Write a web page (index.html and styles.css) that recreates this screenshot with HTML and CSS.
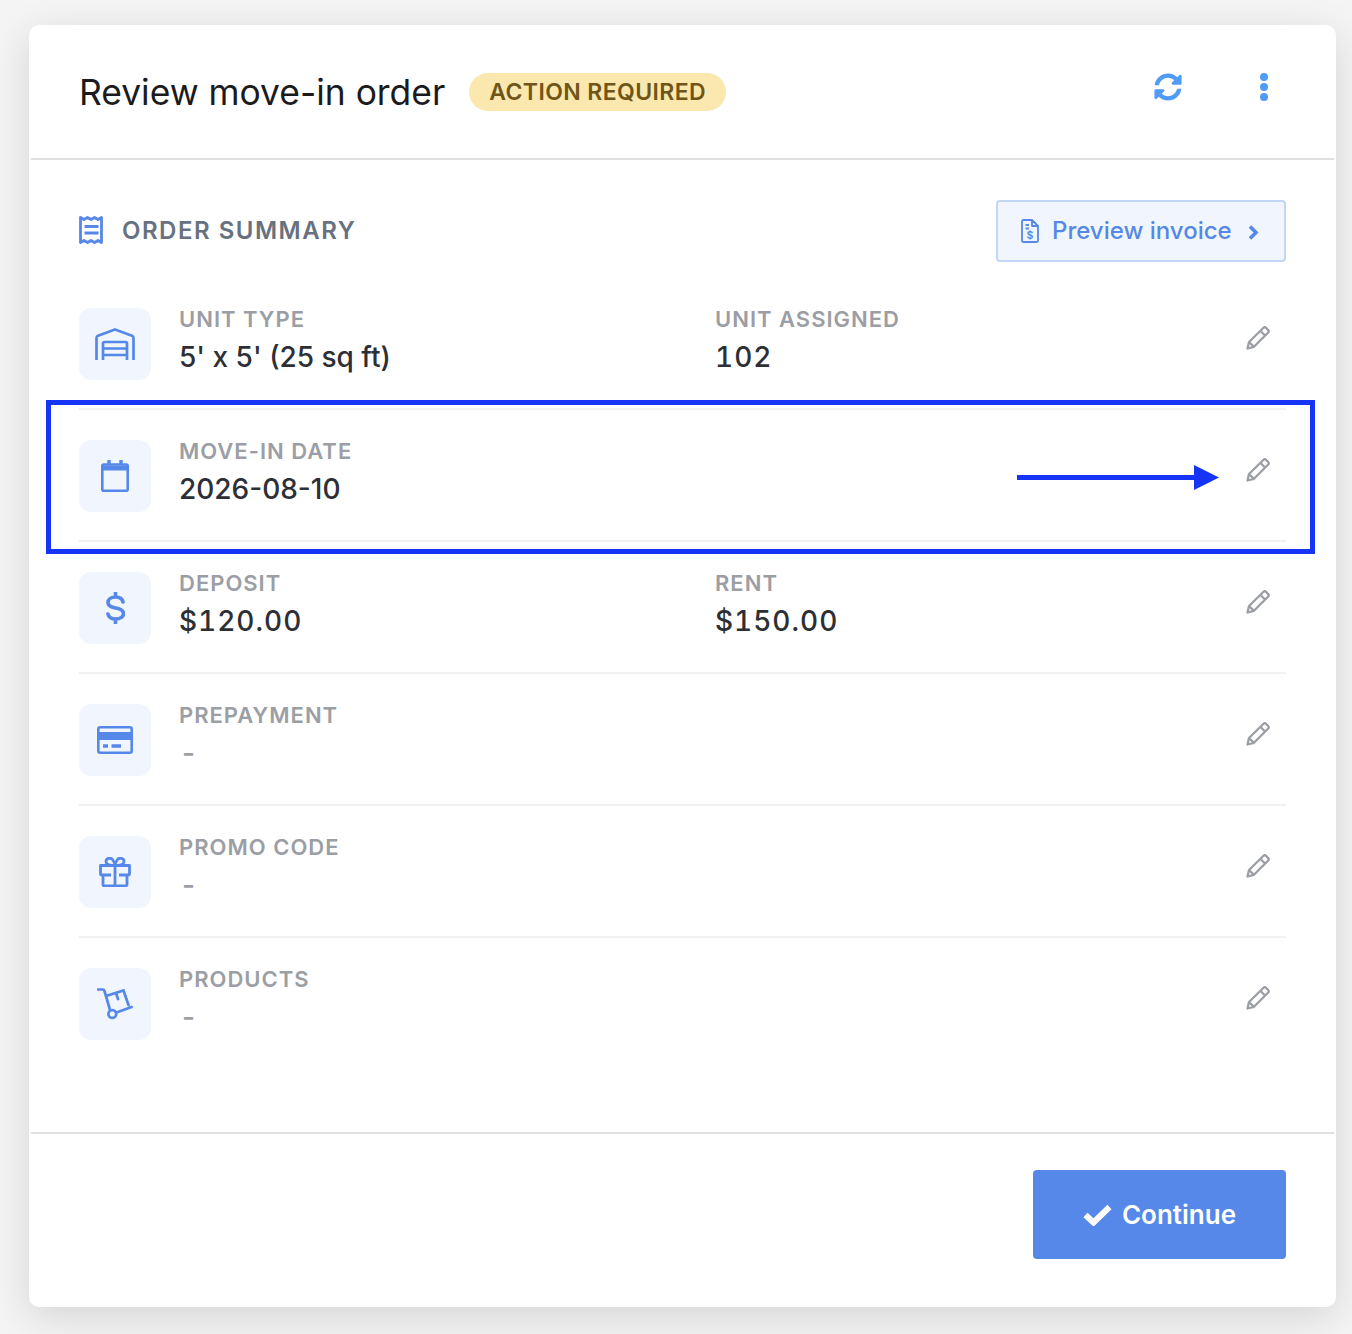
FILE: index.html
```html
<!DOCTYPE html>
<html lang="en">
<head>
<meta charset="utf-8">
<title>Review move-in order</title>
<link rel="stylesheet" href="styles.css">
</head>
<body>
<main class="card">
  <header class="head">
    <h1 class="title">Review move-in order</h1>
    <span class="badge">ACTION REQUIRED</span>
    <div class="head-actions">
      <svg class="sync" viewBox="0 0 512 512"><path d="M370.72 133.28C339.458 104.008 298.888 87.962 255.848 88c-77.458.068-144.328 53.178-162.791 126.85-1.344 5.363-6.122 9.15-11.651 9.15H24.103c-7.498 0-13.194-6.807-11.807-14.176C33.933 94.924 134.813 8 256 8c66.448 0 126.791 26.136 171.315 68.685L463.03 40.97C478.149 25.851 504 36.559 504 57.941V192c0 13.255-10.745 24-24 24H345.941c-21.382 0-32.09-25.851-16.971-40.971l41.75-41.749zM32 296h134.059c21.382 0 32.09 25.851 16.971 40.971l-41.75 41.75c31.262 29.273 71.835 45.319 114.876 45.28 77.418-.07 144.315-53.144 162.787-126.849 1.344-5.363 6.122-9.15 11.651-9.15h57.304c7.498 0 13.194 6.807 11.807 14.176C478.067 417.076 377.187 504 256 504c-66.448 0-126.791-26.136-171.315-68.685L48.97 471.03C33.851 486.149 8 475.441 8 454.059V320c0-13.255 10.745-24 24-24z"/></svg>
      <span class="dots"><i></i><i></i><i></i></span>
    </div>
  </header>

  <section class="body">
    <div class="summary-bar">
      <div class="summary-title">
        <svg class="receipt" viewBox="0 0 25 28" fill="none"><path d="M1.500 1.500l3.500 2 3.500-2 3.500 2 3.500-2 3.500 2 3.500-2v25l-3.500-2-3.500 2-3.500-2-3.500 2-3.500-2-3.500 2z" stroke="#5588e8" stroke-width="2.800" stroke-linejoin="round"/><path d="M5.500 10.500h14M5.500 17h14" stroke="#5588e8" stroke-width="2.800"/></svg>
        <span>ORDER SUMMARY</span>
      </div>
      <button class="preview" type="button">
        <svg class="doc" viewBox="0 0 18 24" fill="none"><path d="M2.500 1h8.500l6 6v14.500a1.500 1.500 0 0 1-1.500 1.500h-13A1.500 1.500 0 0 1 1 21.500v-19A1.500 1.500 0 0 1 2.500 1zM11 1v6h6M4.500 6H8M4.500 9.500H8" stroke="#5588e8" stroke-width="1.800" stroke-linejoin="round"/><text x="9" y="20" font-size="10.500" text-anchor="middle" fill="#5588e8" stroke="none" font-family="Inter" font-weight="600">$</text></svg>
        <span class="preview-text">Preview invoice</span>
        <svg class="chev" viewBox="0 0 11 15" fill="none"><path d="M2 1.500l6 6-6 6" stroke="#5588e8" stroke-width="3.600"/></svg>
      </button>
    </div>

    <ul class="rows">
      <li class="row">
        <div class="icon"><svg width="40" height="32" viewBox="0 0 40 32" fill="none"><path d="M1.500 32V10c0-1 .5-1.800 1.500-2.200L20 1.400l17 6.400c1 .4 1.500 1.200 1.500 2.200v22M8 32V15.500c0-1 .5-1.500 1.500-1.500h21c1 0 1.500.5 1.500 1.500V32M8 20.500h24M8 27h24" stroke="#5588e8" stroke-width="2.700" stroke-linejoin="round"/></svg></div>
        <div class="field"><div class="label">UNIT TYPE</div><div class="value">5' x 5' (25 sq ft)</div></div>
        <div class="field"><div class="label">UNIT ASSIGNED</div><div class="value num">102</div></div>
        <svg class="pencil" viewBox="0 0 24 24" fill="none"><path d="M1.500 22.500l1.500-6.500L17.500 1.800a1.800 1.800 0 0 1 2.500 0l2.200 2.200a1.800 1.800 0 0 1 0 2.500L8 20.800zM3 16l5 4.800M14.500 5l4.500 4.500" stroke="#9b9ea4" stroke-width="2.300" stroke-linejoin="round"/></svg>
      </li>
      <li class="row">
        <div class="icon"><svg width="28" height="32" viewBox="0 0 28 32" fill="none"><rect x="1.300" y="4.500" width="25.400" height="26.200" rx="1.500" stroke="#5588e8" stroke-width="2.600"/><path d="M1.500 8h25" stroke="#5588e8" stroke-width="5"/><path d="M8 0v5M20 0v5" stroke="#5588e8" stroke-width="3.400"/></svg></div>
        <div class="field"><div class="label">MOVE-IN DATE</div><div class="value">2026-08-10</div></div>
        <div class="field"></div>
        <svg class="pencil" viewBox="0 0 24 24" fill="none"><path d="M1.500 22.500l1.500-6.500L17.500 1.800a1.800 1.800 0 0 1 2.500 0l2.200 2.200a1.800 1.800 0 0 1 0 2.500L8 20.800zM3 16l5 4.800M14.500 5l4.500 4.500" stroke="#9b9ea4" stroke-width="2.300" stroke-linejoin="round"/></svg>
      </li>
      <li class="row">
        <div class="icon"><svg width="19" height="32" viewBox="0 0 19 32" fill="none"><path d="M17 10c-.6-3-3.500-5-7.500-5C5 5 2 7.500 2 10.500 2 14 5 15.200 9.500 16c5 .8 8 2.200 8 5.500 0 3-3 5.500-8 5.500-4 0-7-2-7.500-5M9.500 1v4M9.500 27v4" stroke="#5588e8" stroke-width="3.700" stroke-linecap="round"/></svg></div>
        <div class="field"><div class="label">DEPOSIT</div><div class="value num">$120.00</div></div>
        <div class="field"><div class="label">RENT</div><div class="value num">$150.00</div></div>
        <svg class="pencil" viewBox="0 0 24 24" fill="none"><path d="M1.500 22.500l1.500-6.500L17.500 1.800a1.800 1.800 0 0 1 2.500 0l2.200 2.200a1.800 1.800 0 0 1 0 2.500L8 20.800zM3 16l5 4.800M14.500 5l4.500 4.500" stroke="#9b9ea4" stroke-width="2.300" stroke-linejoin="round"/></svg>
      </li>
      <li class="row">
        <div class="icon"><svg width="36" height="28" viewBox="0 0 36 28" fill="none"><rect x="1.300" y="1.300" width="33.400" height="25.400" rx="2" stroke="#5588e8" stroke-width="2.600"/><path d="M1 10h34" stroke="#5588e8" stroke-width="8"/><path d="M6 20h5M14.500 20h9.500" stroke="#5588e8" stroke-width="3.600"/></svg></div>
        <div class="field"><div class="label">PREPAYMENT</div><div class="value muted">-</div></div>
        <div class="field"></div>
        <svg class="pencil" viewBox="0 0 24 24" fill="none"><path d="M1.500 22.500l1.500-6.500L17.500 1.800a1.800 1.800 0 0 1 2.500 0l2.200 2.200a1.800 1.800 0 0 1 0 2.500L8 20.800zM3 16l5 4.800M14.500 5l4.500 4.500" stroke="#9b9ea4" stroke-width="2.300" stroke-linejoin="round"/></svg>
      </li>
      <li class="row">
        <div class="icon"><svg width="32" height="30" viewBox="0 0 32 30" fill="none"><path d="M12 18H3a1.500 1.500 0 0 1-1.500-1.500V8.500h29v8A1.500 1.500 0 0 1 29 18h-9M4 18v9.500A1.500 1.500 0 0 0 5.500 29h21a1.500 1.500 0 0 0 1.500-1.500V18M16 8.500V29M16 8.500c-3 0-9-.5-9-4 0-3.500 5-4 6.500-2S16 6 16 8.500zm0 0c3 0 9-.5 9-4 0-3.500-5-4-6.500-2S16 6 16 8.500z" stroke="#5588e8" stroke-width="2.800" stroke-linejoin="round"/></svg></div>
        <div class="field"><div class="label">PROMO CODE</div><div class="value muted">-</div></div>
        <div class="field"></div>
        <svg class="pencil" viewBox="0 0 24 24" fill="none"><path d="M1.500 22.500l1.500-6.500L17.500 1.800a1.800 1.800 0 0 1 2.500 0l2.200 2.200a1.800 1.800 0 0 1 0 2.500L8 20.800zM3 16l5 4.800M14.500 5l4.500 4.500" stroke="#9b9ea4" stroke-width="2.300" stroke-linejoin="round"/></svg>
      </li>
      <li class="row">
        <div class="icon"><svg width="36" height="32" viewBox="0 0 36 32" fill="none"><path d="M1 1.500h4.500c1 0 1.700.5 2 1.500l5.500 19" stroke="#5588e8" stroke-width="2.700" stroke-linecap="round" stroke-linejoin="round"/><circle cx="15.300" cy="26" r="3.900" stroke="#5588e8" stroke-width="2.700"/><path d="M19.500 24.500L34.500 19M10.500 7.500l16-5 5 14.500M19 5l2 6" stroke="#5588e8" stroke-width="2.700" stroke-linecap="round"/></svg></div>
        <div class="field"><div class="label">PRODUCTS</div><div class="value muted">-</div></div>
        <div class="field"></div>
        <svg class="pencil" viewBox="0 0 24 24" fill="none"><path d="M1.500 22.500l1.500-6.500L17.500 1.800a1.800 1.800 0 0 1 2.500 0l2.200 2.200a1.800 1.800 0 0 1 0 2.500L8 20.800zM3 16l5 4.800M14.500 5l4.500 4.500" stroke="#9b9ea4" stroke-width="2.300" stroke-linejoin="round"/></svg>
      </li>
    </ul>
  </section>

  <footer class="foot">
    <button class="continue" type="button">
      <svg class="check" viewBox="0 0 29 22" fill="none"><path d="M2.500 11l8 7.500L26.500 3" stroke="#fff" stroke-width="6"/></svg>
      <span>Continue</span>
    </button>
  </footer>

  <div class="highlight"></div>
  <svg class="arrow" viewBox="0 0 202 25"><path d="M0 10h177V0l25 12.500L177 25V15H0z" fill="#1534f5"/></svg>
</main>
</body>
</html>
```
FILE: styles.css
```css
* { box-sizing: border-box; }
html, body { margin: 0; height: 1334px; overflow: hidden; }
body {
  background: #f4f4f4;
  padding: 25px 16px 27px 29px;
  font-family: Inter, "Liberation Sans", sans-serif;
}
.card {
  position: relative;
  width: 1307px;
  height: 1282px;
  background: #fff;
  border-radius: 10px;
  box-shadow: 0 10px 40px rgba(0, 0, 0, .13);
  display: flex;
  flex-direction: column;
}
.head {
  height: 135px;
  flex: none;
  margin: 0 2px;
  padding: 0 49px 0 48px;
  border-bottom: 2px solid #e0e0e0;
  display: flex;
  align-items: center;
}
.title {
  margin: 2px 24px 0 0;
  font-size: 35.4px;
  font-weight: 400;
  line-height: 44px;
  color: #1b1b1d;
}
.badge {
  height: 38px;
  padding: 0 20px;
  border-radius: 19px;
  background: #fbe8ae;
  color: #6f5618;
  font-size: 23px;
  font-weight: 600;
  line-height: 38px;
  letter-spacing: .4px;
}
.head-actions {
  margin-left: auto;
  display: flex;
  align-items: center;
  gap: 78px;
  padding: 0 17px 10px 0;
}
.sync { width: 28px; height: 28px; fill: #4f9bf7; display: block; }
.dots { display: flex; flex-direction: column; gap: 2px; }
.dots i { width: 8px; height: 8px; border-radius: 50%; background: #4f9bf7; }
.body { flex: 1; padding: 40px 50px 0; }
.summary-bar {
  height: 62px;
  display: flex;
  align-items: center;
  justify-content: space-between;
}
.summary-title {
  display: flex;
  align-items: center;
  gap: 18px;
  margin-top: -2px;
  color: #68717f;
  font-size: 24px;
  font-weight: 600;
  letter-spacing: 1.5px;
}
.receipt { width: 25px; height: 28px; display: block; }
.preview {
  width: 290px;
  height: 62px;
  display: flex;
  align-items: center;
  padding: 0 0 0 23px;
  background: #f1f6fe;
  border: 2px solid #c2d6f6;
  border-radius: 4px;
  color: #5588e8;
  font: 500 24px Inter, "Liberation Sans", sans-serif;
}
.preview-text { margin-top: -2px; }
.doc { width: 18px; height: 24px; margin-right: 13px; }
.chev { width: 11px; height: 15px; margin-left: 16px; margin-top: 2px; }
.rows { list-style: none; margin: 0; padding: 0; }
.row {
  height: 132px;
  display: flex;
  align-items: flex-start;
  padding-top: 30px;
  border-bottom: 2px solid #f1f1f1;
}
.row:first-child { height: 148px; padding-top: 46px; }
.row:last-child { border-bottom: 0; }
.icon {
  width: 72px;
  height: 72px;
  flex: none;
  margin-right: 28px;
  background: #f1f6fe;
  border-radius: 12px;
  display: flex;
  align-items: center;
  justify-content: center;
}
.field { width: 536px; flex: none; }
.row .field:nth-of-type(3) { width: 531px; }
.label {
  color: #9b9ea4;
  font-size: 22px;
  font-weight: 600;
  line-height: 22px;
  letter-spacing: 1px;
}
.value {
  margin-top: 6px;
  color: #2d2f36;
  font-size: 28px;
  font-weight: 500;
  line-height: 42px;
}
.value.num { letter-spacing: 1px; font-variant-numeric: tabular-nums; }
.value.muted { color: #9b9ea4; padding-left: 3px; }
.pencil { width: 24px; height: 24px; margin: 18px 0 0 0; flex: none; }
.foot {
  height: 175px;
  flex: none;
  margin: 0 2px;
  padding: 36px 48px 0 0;
  border-top: 2px solid #e0e0e0;
  display: flex;
  justify-content: flex-end;
  align-items: flex-start;
}
.continue {
  width: 253px;
  height: 89px;
  display: flex;
  align-items: center;
  justify-content: center;
  gap: 10px;
  border: 0;
  border-radius: 4px;
  background: #5588e8;
  color: #fff;
  font: 600 26px Inter, "Liberation Sans", sans-serif;
}
.continue span { margin-top: -1px; }
.check { width: 29px; height: 22px; }
.highlight {
  position: absolute;
  left: 17px;
  top: 375px;
  width: 1269px;
  height: 154px;
  border: 5px solid #1534f5;
}
.arrow {
  position: absolute;
  left: 988px;
  top: 440px;
  width: 202px;
  height: 25px;
}
```
